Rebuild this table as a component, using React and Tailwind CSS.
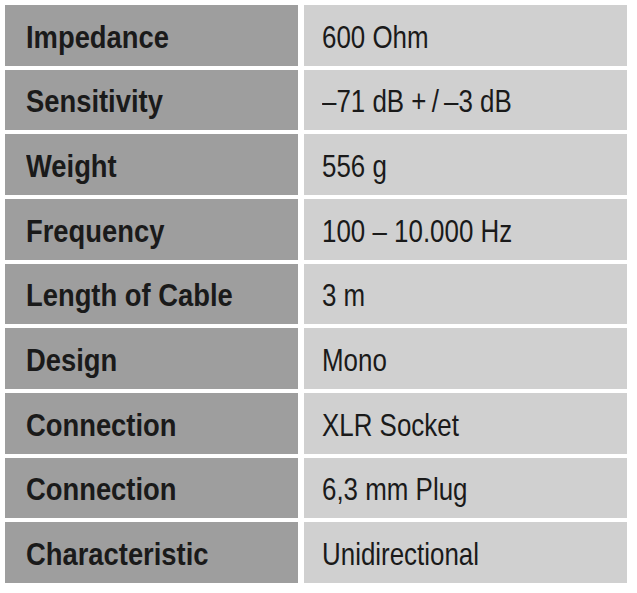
const rows = [
  ["Impedance", "600 Ohm"],
  ["Sensitivity", "–71 dB +\u2009/\u2009–3 dB"],
  ["Weight", "556 g"],
  ["Frequency", "100 – 10.000 Hz"],
  ["Length of Cable", "3 m"],
  ["Design", "Mono"],
  ["Connection", "XLR Socket"],
  ["Connection", "6,3 mm Plug"],
  ["Characteristic", "Unidirectional"],
];

const App = () => {
  return (
    <div
      className="w-[637px] h-[593px] bg-white pt-[5px] pl-[5px]"
      style={{ fontFamily: '"Liberation Sans", Arial, sans-serif' }}
    >
      <div className="grid grid-cols-[293px_323px] grid-rows-9 gap-x-[6px] gap-y-[4px] w-[622px] h-[578px]">
        {rows.map(([label, value], idx) => (
          <div key={idx} className="contents">
            <div className="bg-[#9e9e9e] flex items-center pl-[21px] pt-[3px] text-[#1a1a1a]">
              <span className="inline-block whitespace-nowrap origin-left scale-x-[0.855] text-[32px] font-bold leading-none">
                {label}
              </span>
            </div>
            <div className="bg-[#d0d0d0] flex items-center pl-[18px] pt-[3px] text-[#1a1a1a]">
              <span className="inline-block whitespace-nowrap origin-left scale-x-[0.81] text-[32px] leading-none">
                {value}
              </span>
            </div>
          </div>
        ))}
      </div>
    </div>
  );
};

export default App;
